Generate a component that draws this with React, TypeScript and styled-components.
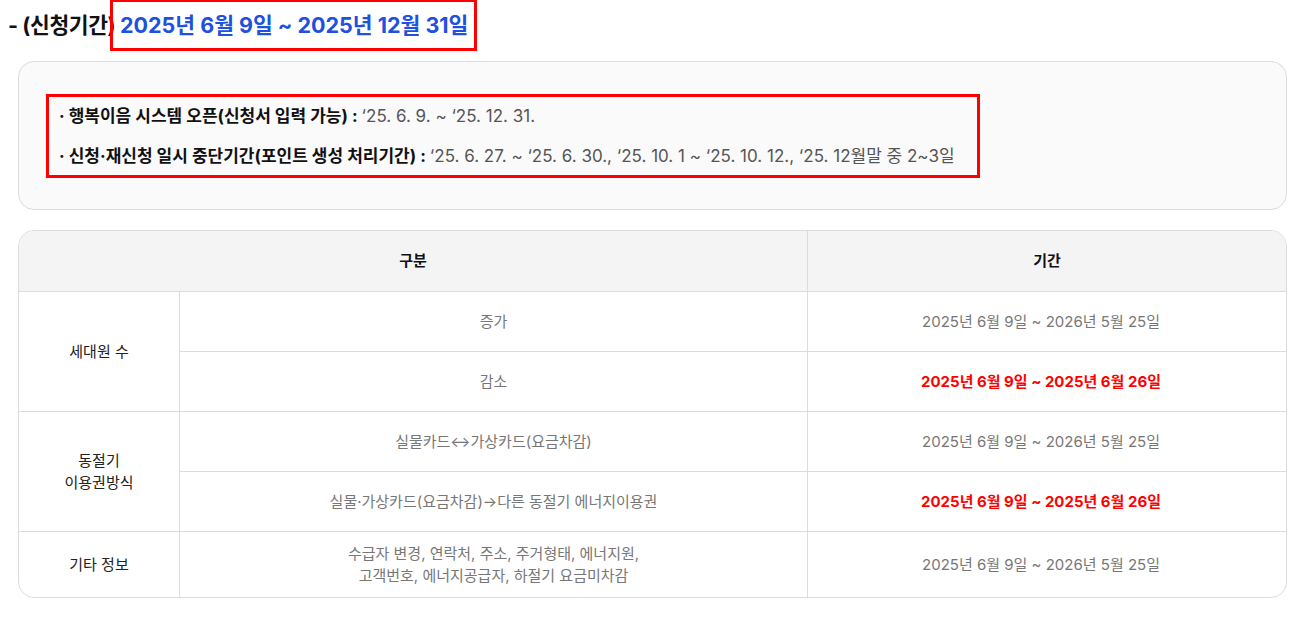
import React from "react";
import styled, { createGlobalStyle } from "styled-components";

const Global = createGlobalStyle`
  html, body { margin: 0; padding: 0; background: #fff; }
  body { font-family: Inter, "Noto Sans CJK KR", sans-serif; color: #111; }
`;

const Page = styled.div`
  padding: 0 28px 0 18px;
  width: 1269px;
  box-sizing: content-box;
`;

const Title = styled.h3`
  margin: -1px 0 10px -10px;
  font-size: 21.5px;
  font-weight: 700;
  line-height: 30px;
  color: #111;
  letter-spacing: -0.4px;
`;

const RedFrame = styled.span`
  display: inline-block;
  border: 3px solid #ff0000;
  box-sizing: border-box;
`;

const TitleHighlight = styled(RedFrame)`
  color: #2050e0;
  letter-spacing: 0;
  padding: 8px 6px 8px 7px;
  margin-left: -10px;
`;

const InfoBox = styled.div`
  background: #fafafa;
  border: 1px solid #dcdcdc;
  border-radius: 16px;
  padding: 32px 27px 31px;
`;

const InfoFrame = styled(RedFrame)`
  display: inline-flex;
  flex-direction: column;
  gap: 16px;
  padding: 7px 22px 7px 10px;
`;

const InfoLine = styled.div`
  font-size: 17px;
  line-height: 24px;
  color: #555;
  white-space: nowrap;
`;

const InfoLabel = styled.b`
  color: #111;
  font-weight: 700;
`;

const TableWrap = styled.div`
  margin-top: 20px;
  border: 1px solid #dcdcdc;
  border-radius: 16px;
  overflow: hidden;
`;

const Table = styled.table`
  width: 100%;
  border-collapse: separate;
  border-spacing: 0;
  table-layout: fixed;
  font-size: 15px;
`;

const Th = styled.th<{ $last?: boolean }>`
  background: #f4f4f4;
  height: 56px;
  padding: 0 0 4px;
  font-weight: 600;
  color: #111;
  border-bottom: 1px solid #dcdcdc;
  border-right: ${(p) => (p.$last ? "none" : "1px solid #dcdcdc")};
`;

const Td = styled.td<{ $kind?: "label" | "sub" | "date" | "alert"; $last?: boolean; $tall?: boolean }>`
  height: ${(p) => (p.$tall ? "65px" : "59px")};
  padding: ${(p) => (p.$kind === "date" || p.$kind === "alert" ? "0 12px 0 0" : "0")};
  text-align: center;
  vertical-align: middle;
  line-height: 22px;
  border-bottom: ${(p) => (p.$last ? "none" : "1px solid #dcdcdc")};
  border-right: ${(p) => (p.$kind === "date" || p.$kind === "alert" ? "none" : "1px solid #dcdcdc")};
  color: ${(p) => (p.$kind === "label" ? "#222" : p.$kind === "alert" ? "#ff0000" : "#777")};
  font-weight: ${(p) => (p.$kind === "alert" ? 700 : 400)};
`;

const NORMAL = "2025년 6월 9일 ~ 2026년 5월 25일";
const ALERT = "2025년 6월 9일 ~ 2025년 6월 26일";

export default function App() {
  return (
    <>
      <Global />
      <Page>
        <Title>
          - (신청기간) <TitleHighlight>2025년 6월 9일 ~ 2025년 12월 31일</TitleHighlight>
        </Title>
        <InfoBox>
          <InfoFrame>
            <InfoLine>
              <InfoLabel>· 행복이음 시스템 오픈(신청서 입력 가능) : </InfoLabel>‘25. 6. 9. ~ ‘25. 12. 31.
            </InfoLine>
            <InfoLine>
              <InfoLabel>· 신청·재신청 일시 중단기간(포인트 생성 처리기간) : </InfoLabel>‘25. 6. 27. ~ ‘25. 6. 30., ‘25. 10. 1 ~ ‘25. 10. 12., ‘25. 12월말 중 2~3일
            </InfoLine>
          </InfoFrame>
        </InfoBox>
        <TableWrap>
          <Table>
            <colgroup>
              <col style={{ width: 161 }} />
              <col style={{ width: 628 }} />
              <col />
            </colgroup>
            <thead>
              <tr>
                <Th colSpan={2}>구분</Th>
                <Th $last>기간</Th>
              </tr>
            </thead>
            <tbody>
              <tr>
                <Td $kind="label" rowSpan={2}>세대원 수</Td>
                <Td $kind="sub">증가</Td>
                <Td $kind="date">{NORMAL}</Td>
              </tr>
              <tr>
                <Td $kind="sub">감소</Td>
                <Td $kind="alert">{ALERT}</Td>
              </tr>
              <tr>
                <Td $kind="label" rowSpan={2}>동절기<br />이용권방식</Td>
                <Td $kind="sub">실물카드↔가상카드(요금차감)</Td>
                <Td $kind="date">{NORMAL}</Td>
              </tr>
              <tr>
                <Td $kind="sub">실물·가상카드(요금차감)→다른 동절기 에너지이용권</Td>
                <Td $kind="alert">{ALERT}</Td>
              </tr>
              <tr>
                <Td $kind="label" $last $tall>기타 정보</Td>
                <Td $kind="sub" $last $tall>수급자 변경, 연락처, 주소, 주거형태, 에너지원,<br />고객번호, 에너지공급자, 하절기 요금미차감</Td>
                <Td $kind="date" $last $tall>{NORMAL}</Td>
              </tr>
            </tbody>
          </Table>
        </TableWrap>
      </Page>
    </>
  );
}
